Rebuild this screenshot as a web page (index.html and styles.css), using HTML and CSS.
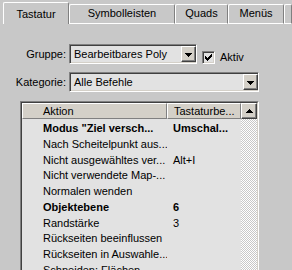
FILE: index.html
```html
<!DOCTYPE html>
<html lang="de">
<head>
    <meta charset="UTF-8">
    <meta name="viewport" content="width=device-width, initial-scale=1.0">
    <title>Tastatur</title>
    <link rel="stylesheet" href="styles.css">
</head>
<body>
    <!-- Tab strip -->
    <div class="tabs">
        <div class="tab tab-active">Tastatur</div>
        <div class="tab tab-sym">Symbolleisten</div>
        <div class="tab tab-quads">Quads</div>
        <div class="tab tab-menus">Menüs</div>
        <div class="tab tab-more"></div>
    </div>

    <div class="panel">
        <div class="field-row">
            <label class="field-label">Gruppe:</label>
            <div class="combo combo-group">
                <span class="combo-text">Bearbeitbares Poly</span>
                <span class="drop-btn"><svg width="7" height="4" viewBox="0 0 7 4"><path d="M0 0h7v1h-1v1h-1v1h-1v1h-1v-1h-1v-1h-1v-1h-1z" fill="#000"/></svg></span>
            </div>
            <div class="check-wrap">
                <span class="check"><svg width="7" height="7" viewBox="0 0 7 7"><path d="M0 2h1v3H0zM1 3h1v3H1zM2 4h1v3H2zM3 3h1v3H3zM4 2h1v3H4zM5 1h1v3H5zM6 0h1v3H6z" fill="#000"/></svg></span>
                <span class="check-label">Aktiv</span>
            </div>
        </div>
        <div class="field-row">
            <label class="field-label">Kategorie:</label>
            <div class="combo combo-cat">
                <span class="combo-text">Alle Befehle</span>
                <span class="drop-btn"><svg width="7" height="4" viewBox="0 0 7 4"><path d="M0 0h7v1h-1v1h-1v1h-1v1h-1v-1h-1v-1h-1v-1h-1z" fill="#000"/></svg></span>
            </div>
        </div>

        <!-- Action list -->
        <div class="list">
            <div class="list-inner">
                <div class="list-main">
                    <div class="list-head">
                        <div class="head-cell col-action">Aktion</div>
                        <div class="head-cell col-key">Tastaturbe...</div>
                    </div>
                    <div class="list-body">
                        <div class="row bold"><span class="col-action">Modus "Ziel versch...</span><span class="col-key">Umschal...</span></div>
                        <div class="row"><span class="col-action">Nach Scheitelpunkt aus...</span><span class="col-key"></span></div>
                        <div class="row"><span class="col-action">Nicht ausgewähltes ver...</span><span class="col-key">Alt+I</span></div>
                        <div class="row"><span class="col-action">Nicht verwendete Map-...</span><span class="col-key"></span></div>
                        <div class="row"><span class="col-action">Normalen wenden</span><span class="col-key"></span></div>
                        <div class="row bold"><span class="col-action">Objektebene</span><span class="col-key">6</span></div>
                        <div class="row"><span class="col-action">Randstärke</span><span class="col-key">3</span></div>
                        <div class="row"><span class="col-action">Rückseiten beeinflussen</span><span class="col-key"></span></div>
                        <div class="row"><span class="col-action">Rückseiten in Auswahle...</span><span class="col-key"></span></div>
                        <div class="row"><span class="col-action">Schneiden: Flächen...</span><span class="col-key"></span></div>
                    </div>
                </div>
                <div class="scrollbar">
                    <div class="scroll-btn"><svg width="7" height="4" viewBox="0 0 7 4"><path d="M3 0h1v1h1v1h1v1h1v1H0v-1h1v-1h1v-1h1z" fill="#000"/></svg></div>
                    <div class="scroll-track"></div>
                </div>
            </div>
        </div>
    </div>
</body>
</html>
```

FILE: styles.css
```css
html, body {
    margin: 0;
    height: 100%;
    overflow: hidden;
}
body {
    background: #c8c8c8;
    font-family: "Liberation Sans", Arial, sans-serif;
    font-size: 11px;
    color: #000;
}

/* tabs */
.tabs {
    display: flex;
    align-items: flex-end;
    height: 24px;
    padding-left: 3px;
}
.tab {
    box-sizing: border-box;
    height: 20px;
    padding-top: 2px;
    line-height: 13px;
    text-align: center;
    white-space: nowrap;
    border: 1px solid #fff;
    border-right-color: #808080;
    border-radius: 2px 2px 0 0;
}
.tab-active {
    width: 66px;
    height: 22px;
    padding-top: 5px;
    border-bottom: none;
}
.tab-sym {
    width: 106px;
}
.tab-quads {
    width: 53px;
}
.tab-menus {
    width: 56px;
}
.tab-more {
    flex: 1;
}

/* form */
.panel {
    padding-top: 20px;
}
.field-row {
    display: flex;
    align-items: center;
    height: 20px;
    margin-bottom: 8px;
}
.field-label {
    width: 66px;
    margin-right: 3px;
    text-align: right;
    line-height: 13px;
}
.combo {
    box-sizing: border-box;
    height: 20px;
    display: flex;
    align-items: center;
    justify-content: space-between;
    padding-left: 4px;
    background: #e2e2e2;
    border: 1px solid;
    border-color: #808080 #fff #fff #808080;
    box-shadow: inset 1px 1px #404040, inset -1px -1px #d4d0c8;
    line-height: 13px;
}
.combo-group {
    width: 128px;
}
.combo-cat {
    width: 190px;
}
.drop-btn {
    box-sizing: border-box;
    width: 15px;
    height: 16px;
    display: flex;
    align-items: center;
    justify-content: center;
    background: #d4d0c8;
    border: 1px solid;
    border-color: #fff #404040 #404040 #fff;
    box-shadow: inset -1px -1px #808080;
}
.drop-btn svg {
    margin-top: 1px;
}
.check-wrap {
    align-self: flex-end;
    display: flex;
    align-items: center;
    margin-left: 5px;
}
.check {
    box-sizing: border-box;
    width: 13px;
    height: 13px;
    display: flex;
    align-items: center;
    justify-content: center;
    background: #e2e2e2;
    border: 1px solid;
    border-color: #808080 #fff #fff #808080;
    box-shadow: inset 1px 1px #404040, inset -1px -1px #d4d0c8;
}
.check-label {
    margin-left: 5px;
    line-height: 13px;
}

/* list */
.list {
    box-sizing: border-box;
    width: 239px;
    height: 200px;
    margin: 9px 0 0 20px;
    border: 1px solid;
    border-color: #808080 #fff #fff #808080;
}
.list-inner {
    box-sizing: border-box;
    height: 100%;
    display: flex;
    background: #e2e2e2;
    border: 1px solid;
    border-color: #404040 #d4d0c8 #d4d0c8 #404040;
}
.list-main {
    flex: 1;
    min-width: 0;
}
.list-head {
    display: flex;
    height: 16px;
    background: #d4d0c8;
}
.head-cell {
    box-sizing: border-box;
    height: 16px;
    padding-top: 1px;
    line-height: 13px;
    white-space: nowrap;
    border: 1px solid;
    border-color: #fff #808080 #808080 #fff;
}
.head-cell.col-action {
    width: 145px;
    padding-left: 20px;
}
.head-cell.col-key {
    flex: 1;
    padding-left: 6px;
}
.list-body {
    padding-top: 2px;
}
.row {
    display: flex;
    height: 15.75px;
    line-height: 15.75px;
    white-space: nowrap;
}
.row .col-action {
    box-sizing: border-box;
    width: 145px;
    padding-left: 21px;
    overflow: hidden;
}
.row .col-key {
    padding-left: 6px;
}
.bold {
    font-weight: bold;
}
.scrollbar {
    width: 16px;
    display: flex;
    flex-direction: column;
}
.scroll-btn {
    box-sizing: border-box;
    height: 16px;
    display: flex;
    align-items: center;
    justify-content: center;
    background: #d4d0c8;
    border: 1px solid;
    border-color: #fff #404040 #404040 #fff;
    box-shadow: inset -1px -1px #808080;
}
.scroll-track {
    flex: 1;
    background-image: repeating-conic-gradient(#fff 0 25%, #c8c8c8 0 50%);
    background-size: 2px 2px;
}
```
